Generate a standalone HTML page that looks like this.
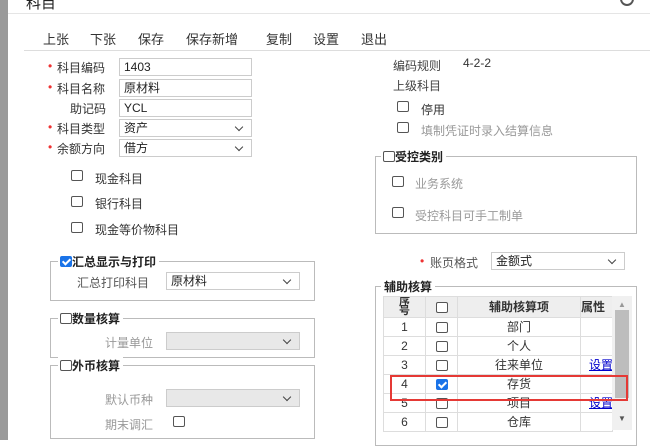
<!DOCTYPE html>
<html><head><meta charset="utf-8"><style>
*{margin:0;padding:0;box-sizing:border-box}
body{width:650px;height:440px;overflow:hidden;background:#fff;font-family:"Liberation Sans","Noto Sans CJK SC",sans-serif;font-size:12px;color:#333;position:relative}
.a{position:absolute;white-space:nowrap}
.inp{position:absolute;border:1px solid #ccc;background:#fff;height:18px;padding-left:4px;line-height:16px;font-size:12px;color:#222}
.sel:after{content:"";position:absolute;right:9px;top:4px;width:5px;height:5px;border-right:1.5px solid #444;border-bottom:1.5px solid #444;transform:rotate(45deg)}
.dis{background:#e8e8e8}
.cb{position:absolute;width:12px;height:11px;border:1px solid #555;border-radius:2px;background:#fff}
.ck{background:#1a73e8;border-color:#1a73e8}
.ck:after{content:"";position:absolute;left:3px;top:0px;width:3px;height:6px;border-right:2px solid #fff;border-bottom:2px solid #fff;transform:rotate(45deg)}
.fs{position:absolute;border:1px solid #bbb}
.lg{position:absolute;background:#fff;padding:0 3px;font-weight:bold;color:#222}
.red{color:#e33}
.g{color:#999}
table{border-collapse:collapse;position:absolute;left:383px;top:296px;width:229px;font-size:12px;table-layout:fixed}
td{border:1px solid #ddd;height:19px;line-height:17px;text-align:center;padding:0;white-space:nowrap;overflow:hidden}
.ic{position:relative;display:inline-block;left:0;top:2px}
</style></head><body>
<div class="a" style="left:0;top:0;width:8px;height:440px;background:#9a9a9a"></div>
<div class="a" style="left:8px;top:13px;width:642px;height:1px;background:#e5e5e5"></div>
<div class="a" style="left:26px;top:-8px;font-size:15px;color:#222">科目</div>
<div class="a" style="left:620px;top:-8px;width:14px;height:14px;border:2px solid #555;border-radius:50%"></div>
<div class="a" style="left:43px;top:29px;font-size:13px">上张</div>
<div class="a" style="left:90px;top:29px;font-size:13px">下张</div>
<div class="a" style="left:138px;top:29px;font-size:13px">保存</div>
<div class="a" style="left:186px;top:29px;font-size:13px">保存新增</div>
<div class="a" style="left:266px;top:29px;font-size:13px">复制</div>
<div class="a" style="left:313px;top:29px;font-size:13px">设置</div>
<div class="a" style="left:361px;top:29px;font-size:13px">退出</div>
<div class="a" style="left:24px;top:50px;width:626px;height:1px;background:#ddd"></div>

<div class="a red" style="left:48px;top:59px">•</div><div class="a" style="left:57px;top:59px">科目编码</div>
<div class="inp" style="left:119px;top:58px;width:133px">1403</div>
<div class="a red" style="left:48px;top:80px">•</div><div class="a" style="left:57px;top:80px">科目名称</div>
<div class="inp" style="left:119px;top:79px;width:133px">原材料</div>
<div class="a" style="left:70px;top:100px">助记码</div>
<div class="inp" style="left:119px;top:99px;width:133px">YCL</div>
<div class="a red" style="left:48px;top:120px">•</div><div class="a" style="left:57px;top:120px">科目类型</div>
<div class="inp sel" style="left:119px;top:119px;width:133px">资产</div>
<div class="a red" style="left:48px;top:140px">•</div><div class="a" style="left:57px;top:140px">余额方向</div>
<div class="inp sel" style="left:119px;top:139px;width:133px">借方</div>

<div class="cb" style="left:71px;top:170px"></div><div class="a" style="left:95px;top:170px">现金科目</div>
<div class="cb" style="left:71px;top:196px"></div><div class="a" style="left:95px;top:195px">银行科目</div>
<div class="cb" style="left:71px;top:222px"></div><div class="a" style="left:95px;top:221px">现金等价物科目</div>

<div class="fs" style="left:50px;top:261px;width:265px;height:40px"></div>
<div class="lg" style="left:58px;top:253px;padding-left:2px"><span class="cb ck" style="position:relative;display:inline-block;vertical-align:-1px;left:0;top:0"></span>汇总显示与打印</div>
<div class="a" style="left:77px;top:274px;color:#555">汇总打印科目</div>
<div class="inp sel" style="left:166px;top:272px;width:134px">原材料</div>

<div class="fs" style="left:50px;top:318px;width:265px;height:40px"></div>
<div class="lg" style="left:58px;top:310px;padding-left:2px"><span class="cb" style="position:relative;display:inline-block;vertical-align:-1px;left:0;top:0"></span>数量核算</div>
<div class="a g" style="left:105px;top:334px">计量单位</div>
<div class="inp sel dis" style="left:166px;top:332px;width:134px"></div>

<div class="fs" style="left:50px;top:365px;width:265px;height:74px"></div>
<div class="lg" style="left:58px;top:357px;padding-left:2px"><span class="cb" style="position:relative;display:inline-block;vertical-align:-1px;left:0;top:0"></span>外币核算</div>
<div class="a g" style="left:105px;top:391px">默认币种</div>
<div class="inp sel dis" style="left:166px;top:389px;width:134px"></div>
<div class="a g" style="left:105px;top:416px">期末调汇</div>
<div class="cb" style="left:173px;top:416px"></div>

<div class="a" style="left:393px;top:57px;color:#444">编码规则</div><div class="a" style="left:463px;top:56px">4-2-2</div>
<div class="a" style="left:393px;top:77px;color:#444">上级科目</div>
<div class="cb" style="left:397px;top:101px"></div><div class="a" style="left:421px;top:101px">停用</div>
<div class="cb" style="left:397px;top:122px"></div><div class="a g" style="left:421px;top:122px">填制凭证时录入结算信息</div>

<div class="fs" style="left:375px;top:156px;width:262px;height:78px"></div>
<div class="lg" style="left:381px;top:148px;padding-left:2px"><span class="cb" style="position:relative;display:inline-block;vertical-align:-1px;left:0;top:0"></span>受控类别</div>
<div class="cb" style="left:392px;top:176px"></div><div class="a g" style="left:415px;top:175px">业务系统</div>
<div class="cb" style="left:392px;top:207px"></div><div class="a g" style="left:415px;top:207px">受控科目可手工制单</div>

<div class="a red" style="left:420px;top:254px">•</div><div class="a" style="left:430px;top:254px;color:#555">账页格式</div>
<div class="inp sel" style="left:491px;top:252px;width:134px">金额式</div>

<div class="fs" style="left:375px;top:286px;width:262px;height:160px"></div>
<div class="lg" style="left:381px;top:278px;font-size:12px">辅助核算</div>
<table>
<colgroup><col style="width:42px"><col style="width:32px"><col style="width:123px"><col style="width:32px"></colgroup>
<tr style="background:#eee;font-weight:bold"><td style="height:21px;line-height:9px;font-size:11px">序<br>号</td><td><span class="cb ic"></span></td><td>辅助核算项</td><td style="text-align:left">属性</td></tr>
<tr><td>1</td><td><span class="cb ic"></span></td><td>部门</td><td></td></tr>
<tr><td>2</td><td><span class="cb ic"></span></td><td>个人</td><td></td></tr>
<tr><td>3</td><td><span class="cb ic"></span></td><td>往来单位</td><td style="color:#00c;text-decoration:underline;text-align:left;padding-left:8px">设置</td></tr>
<tr><td>4</td><td><span class="cb ck ic"></span></td><td>存货</td><td></td></tr>
<tr><td>5</td><td><span class="cb ic"></span></td><td>项目</td><td style="color:#00c;text-decoration:underline;text-align:left;padding-left:8px">设置</td></tr>
<tr><td>6</td><td><span class="cb ic"></span></td><td>仓库</td><td></td></tr>
</table>
<div class="a" style="left:612px;top:296px;width:20px;height:134px;background:#f0f0f0"></div>
<div class="a" style="left:615px;top:310px;width:14px;height:88px;background:#bdbdbd"></div>
<div class="a" style="left:618px;top:300px;font-size:8px;color:#999">▲</div>
<div class="a" style="left:618px;top:414px;font-size:8px;color:#555">▼</div>
<div class="a" style="left:390px;top:375px;width:238px;height:26px;border:2px solid #e53935"></div>
</body></html>
